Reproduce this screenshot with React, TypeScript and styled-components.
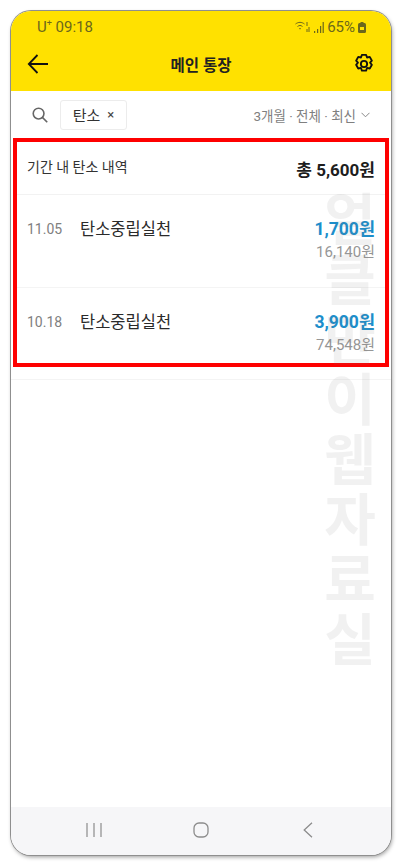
import React from "react";
import styled, { createGlobalStyle } from "styled-components";

const GlobalStyle = createGlobalStyle`
  html, body {
    margin: 0;
    padding: 0;
    background: #fff;
  }
  body {
    font-family: Roboto, "Noto Sans CJK KR", sans-serif;
  }
`;

const Page = styled.div`
  width: 402px;
  height: 866px;
  padding: 11px;
  box-sizing: border-box;
  background: #fff;
  overflow: hidden;
`;

const Phone = styled.div`
  position: relative;
  width: 380px;
  height: 844px;
  border-radius: 20px;
  overflow: hidden;
  background: #fff;
  display: flex;
  flex-direction: column;
  box-shadow: 0 0 0 1px #8f8f8f, 1px 2px 4px rgba(0, 0, 0, 0.4);
`;

const Yellow = styled.header`
  background: #ffe100;
  height: 80px;
  flex: none;
`;

const StatusBar = styled.div`
  height: 30px;
  padding: 2px 25px 0 26px;
  box-sizing: border-box;
  display: flex;
  align-items: center;
  justify-content: space-between;
  font-size: 15px;
  color: #6b671c;
`;

const StatusRight = styled.div`
  display: flex;
  align-items: center;
  gap: 3px;
`;

const PlusMark = styled.sup`
  font-size: 9px;
  line-height: 0;
`;

const TitleBar = styled.div`
  height: 46px;
  padding: 0 16px;
  display: flex;
  align-items: center;
  justify-content: space-between;
`;

const Title = styled.div`
  font-size: 15.5px;
  font-weight: 700;
  color: #222;
`;

const FilterBar = styled.div`
  height: 47px;
  padding: 0 21px;
  display: flex;
  align-items: center;
  flex: none;
`;

const Chip = styled.div`
  margin-left: 12px;
  width: 67px;
  height: 30px;
  box-sizing: border-box;
  border: 1px solid #ececec;
  border-radius: 3px;
  display: flex;
  align-items: center;
  justify-content: center;
  gap: 7px;
  font-size: 15px;
  color: #333;
`;

const Close = styled.span`
  font-size: 13px;
  color: #444;
`;

const Sort = styled.div`
  margin-left: auto;
  display: flex;
  align-items: center;
  gap: 5px;
  font-size: 13.5px;
  color: #7f7f7f;
`;

const Highlight = styled.section`
  margin-left: 2px;
  width: 376px;
  height: 229px;
  box-sizing: border-box;
  border: 4px solid #fe0000;
  flex: none;
  display: flex;
  flex-direction: column;
`;

const Summary = styled.div`
  height: 53px;
  padding: 0 10px;
  box-sizing: border-box;
  border-bottom: 1px solid #f2f2f2;
  display: flex;
  justify-content: space-between;
  align-items: center;
  flex: none;
`;

const SummaryLabel = styled.span`
  font-size: 14px;
  color: #333;
  margin-bottom: 5px;
`;

const SummaryTotal = styled.span`
  font-size: 17px;
  font-weight: 700;
  color: #1d1d1d;
`;

const Row = styled.div`
  height: 92px;
  flex: none;
  box-sizing: border-box;
  padding: 24px 10px 0;
  display: flex;
  align-items: flex-start;
  & + & {
    height: 76px;
    border-top: 1px solid #f4f4f4;
  }
`;

const DateText = styled.span`
  width: 53px;
  font-size: 14px;
  line-height: 20px;
  color: #808080;
`;

const Name = styled.span`
  font-size: 16.5px;
  line-height: 20px;
  color: #2a2a2a;
  margin-top: 1px;
`;

const Amounts = styled.div`
  margin-left: auto;
  display: flex;
  flex-direction: column;
  align-items: flex-end;
  gap: 3px;
`;

const Amount = styled.span`
  font-size: 17.5px;
  line-height: 20px;
  font-weight: 700;
  color: #1c8ecb;
`;

const Balance = styled.span`
  font-size: 15px;
  line-height: 20px;
  color: #969696;
`;

const Divider = styled.div`
  height: 1px;
  background: #f4f4f4;
  margin-top: 12px;
  flex: none;
`;

const Spacer = styled.div`
  flex: 1;
`;

const NavBar = styled.nav`
  height: 48px;
  background: #f6f6f8;
  display: grid;
  grid-template-columns: 166px 48px 166px;
  align-items: center;
  justify-items: center;
  flex: none;
  padding-bottom: 2px;
  box-sizing: border-box;
`;

const Watermark = styled.div`
  position: absolute;
  right: 9px;
  top: 180px;
  width: 64px;
  font-size: 56px;
  line-height: 60px;
  font-weight: 700;
  text-align: center;
  word-break: break-all;
  color: rgba(120, 120, 120, 0.1);
  pointer-events: none;
`;

const App: React.FC = () => {
  return (
    <Page>
      <GlobalStyle />
      <Phone>
        <Yellow>
          <StatusBar>
            <span>
              U<PlusMark>+</PlusMark> 09:18
            </span>
            <StatusRight>
              <svg width="16" height="12" viewBox="0 0 16 12" fill="none" stroke="#6b671c" strokeWidth="1">
                <path d="M.5 3c3-2.2 6-2.2 9 0M2.5 5.5c2-1.4 3-1.4 5 0M4 8c1-.7 1-.7 2 0" />
                <path d="M12 1v4M14 6v5M12 8v3" />
              </svg>
              <svg width="10" height="11" viewBox="0 0 10 11" fill="#6b671c">
                <rect x="0" y="9" width="1.2" height="2" />
                <rect x="3" y="7" width="1.2" height="4" />
                <rect x="6" y="4" width="1.2" height="7" />
                <rect x="8.6" y="0" width="1.2" height="11" />
              </svg>
              <span>65%</span>
              <svg width="8" height="11" viewBox="0 0 8 11">
                <rect x="0" y="1" width="8" height="10" rx="1.5" fill="#6b671c" />
                <rect x="2.5" y="0" width="3" height="2" fill="#6b671c" />
                <rect x="2" y="5" width="4" height="3" fill="#ffe100" />
              </svg>
            </StatusRight>
          </StatusBar>
          <TitleBar>
            <svg width="22" height="22" viewBox="0 0 22 22" fill="none" stroke="#111" strokeWidth="1.8">
              <path d="M21 11H2M10.5 2 1.8 11l8.7 9" />
            </svg>
            <Title>메인 통장</Title>
            <svg width="22" height="22" viewBox="0 0 24 24" fill="none" stroke="#111" strokeWidth="2" strokeLinejoin="round">
              <path d="M9.7 2h4.6l1 2.9 3-.6 2.3 4-2 2.3 2 2.3-2.3 4-3-.6-1 2.9H9.7l-1-2.9-3 .6-2.3-4 2-2.3-2-2.3 2.3-4 3 .6z" />
              <circle cx="12" cy="12" r="3.4" />
            </svg>
          </TitleBar>
        </Yellow>
        <FilterBar>
          <svg width="16" height="16" viewBox="0 0 17 17" fill="none" stroke="#666" strokeWidth="1.7">
            <circle cx="7" cy="7" r="5.7" />
            <path d="M11 11l5.2 5.2" />
          </svg>
          <Chip>
            탄소 <Close>×</Close>
          </Chip>
          <Sort>
            3개월 · 전체 · 최신
            <svg width="9" height="6" viewBox="0 0 9 6" fill="none" stroke="#888" strokeWidth="1">
              <path d="M.5.8 4.5 4.8 8.5.8" />
            </svg>
          </Sort>
        </FilterBar>
        <Highlight>
          <Summary>
            <SummaryLabel>기간 내 탄소 내역</SummaryLabel>
            <SummaryTotal>총 5,600원</SummaryTotal>
          </Summary>
          <Row>
            <DateText>11.05</DateText>
            <Name>탄소중립실천</Name>
            <Amounts>
              <Amount>1,700원</Amount>
              <Balance>16,140원</Balance>
            </Amounts>
          </Row>
          <Row>
            <DateText>10.18</DateText>
            <Name>탄소중립실천</Name>
            <Amounts>
              <Amount>3,900원</Amount>
              <Balance>74,548원</Balance>
            </Amounts>
          </Row>
        </Highlight>
        <Divider />
        <Spacer />
        <NavBar>
          <svg width="16" height="16" viewBox="0 0 16 16" stroke="#8c8c8c" strokeWidth="1.2">
            <path d="M1 1v14M8 1v14M15 1v14" />
          </svg>
          <svg width="16" height="16" viewBox="0 0 16 16" fill="none" stroke="#8c8c8c" strokeWidth="1.3">
            <rect x="1" y="1" width="14" height="14" rx="5" />
          </svg>
          <svg width="10" height="16" viewBox="0 0 10 16" fill="none" stroke="#8c8c8c" strokeWidth="1.3">
            <path d="M9 .7 1.2 8 9 15.3" />
          </svg>
        </NavBar>
        <Watermark>얼클만이웹자료실</Watermark>
      </Phone>
    </Page>
  );
};

export default App;
